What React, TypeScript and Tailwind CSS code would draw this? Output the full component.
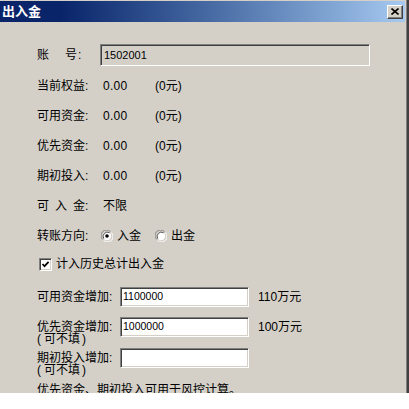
import React from 'react';

const font = "font-['Liberation_Sans','Noto_Sans_CJK_SC',sans-serif]";

const sunken =
  'border border-t-[#808080] border-l-[#808080] border-b-white border-r-white shadow-[inset_1px_1px_0_#404040,inset_-1px_-1px_0_#d4d0c8]';

const Radio: React.FC<{ checked?: boolean }> = ({ checked }) => (
  <svg width="12" height="12" viewBox="0 0 12 12" className="shrink-0">
    <circle cx="6" cy="6" r="5.5" fill="#d4d0c8" />
    <path d="M1.6 9.4 A5.5 5.5 0 0 1 9.4 1.6" stroke="#808080" strokeWidth="1" fill="none" />
    <path d="M10.4 2.6 A5.5 5.5 0 0 1 2.6 10.4" stroke="#ffffff" strokeWidth="1" fill="none" />
    <circle cx="6" cy="6" r="4.2" fill="#ffffff" />
    <path d="M2.8 8.6 A4.2 4.2 0 0 1 8.6 2.8" stroke="#404040" strokeWidth="0.9" fill="none" />
    {checked && <circle cx="6" cy="6" r="1.8" fill="#000000" />}
  </svg>
);

const Checkbox: React.FC = () => (
  <div className={`w-[13px] h-[13px] bg-white shrink-0 flex items-center justify-center ${sunken}`}>
    <svg width="9" height="9" viewBox="0 0 9 9">
      <path d="M1.5 4 L3.5 6.2 L7.6 1.8" stroke="#000" strokeWidth="1.7" fill="none" />
    </svg>
  </div>
);

const ValueRow: React.FC<{ label: string; value: string }> = ({ label, value }) => (
  <div className="flex items-center h-[30px]">
    <span className="w-[66px]">{label}:</span>
    <span className="w-[52px] tracking-[0.3px]">{value}</span>
    <span>(0元)</span>
  </div>
);

const AddRow: React.FC<{ label: string; value: string; unit?: string; sub?: boolean; className?: string }> = ({
  label,
  value,
  unit,
  sub,
  className = '',
}) => (
  <div className={`flex items-start ${className}`}>
    <div className={`w-[83px] leading-[12px] ${sub ? 'pt-[4px]' : 'self-center'}`}>
      <div>{label}:</div>
      {sub && (
        <div className="flex">
          <span>(</span>
          <span className="ml-[3px]">可不填</span>
          <span className="ml-[2px]">)</span>
        </div>
      )}
    </div>
    <div className="flex items-center h-[20px]">
      <div className={`w-[129px] h-[20px] bg-white pl-[2px] text-[10.5px] flex items-center ${sunken}`}>{value}</div>
      {unit && <span className="ml-[9px]">{unit}</span>}
    </div>
  </div>
);

export default function App() {
  return (
    <div className={`w-[409px] h-[409px] bg-white ${font} text-[12px] text-black`}>
      <div className="w-[409px] h-[393px] flex overflow-hidden">
        <div className="flex-1 bg-[#d4d0c8] pt-px flex flex-col">
          {/* title bar */}
          <div className="shrink-0 h-[21px] mr-px bg-linear-to-r from-[#0a246a] from-15% to-[#a6caf0] flex items-center justify-between pl-[2px] pr-[2px]">
            <span className="text-white font-bold text-[13px] leading-none">出入金</span>
            <div className="w-[16px] h-[14px] bg-[#d4d0c8] border border-t-white border-l-white border-b-[#404040] border-r-[#404040] shadow-[inset_-1px_-1px_0_#808080] flex items-center justify-center">
              <svg width="8" height="7" viewBox="0 0 8 7">
                <path d="M0.5 0.5 L7.5 6.5 M7.5 0.5 L0.5 6.5" stroke="#000" strokeWidth="1.6" />
              </svg>
            </div>
          </div>

          <div className="shrink-0 pl-[37px] flex flex-col">
            {/* account */}
            <div className="flex items-center h-[22px] mt-[22px]">
              <div className="w-[63px] flex">
                <span>账</span>
                <span className="ml-[16px]">号</span>
                <span className="ml-px">:</span>
              </div>
              <div className={`w-[270px] h-[22px] bg-[#d4d0c8] pl-[3px] text-[11px] flex items-center ${sunken}`}>
                1502001
              </div>
            </div>

            <div className="mt-[5px]">
              <ValueRow label="当前权益" value="0.00" />
              <ValueRow label="可用资金" value="0.00" />
              <ValueRow label="优先资金" value="0.00" />
              <ValueRow label="期初投入" value="0.00" />
              <div className="flex items-center h-[30px]">
                <div className="w-[66px] flex">
                  <span>可</span>
                  <span className="ml-[6px]">入</span>
                  <span className="ml-[6px]">金</span>
                  <span>:</span>
                </div>
                <span>不限</span>
              </div>
              <div className="flex items-center h-[30px]">
                <span className="w-[64px]">转账方向:</span>
                <Radio checked />
                <span className="ml-[4px]">入金</span>
                <span className="ml-[14px]">
                  <Radio />
                </span>
                <span className="ml-[4px]">出金</span>
              </div>
              <div className="flex items-center h-[26px] pl-[2px]">
                <Checkbox />
                <span className="ml-[4px]">计入历史总计出入金</span>
              </div>
            </div>

            <AddRow className="mt-[10px]" label="可用资金增加" value="1100000" unit="110万元" />
            <AddRow className="mt-[10px]" label="优先资金增加" value="1000000" unit="100万元" sub />
            <AddRow className="mt-[3px]" label="期初投入增加" value="" sub />

            <div className="mt-[8px] leading-[12px]">优先资金、期初投入可用于风控计算。</div>
          </div>
        </div>
        <div className="w-px bg-[#808080]" />
        <div className="w-[2px] bg-[#404040]" />
      </div>
    </div>
  );
}
